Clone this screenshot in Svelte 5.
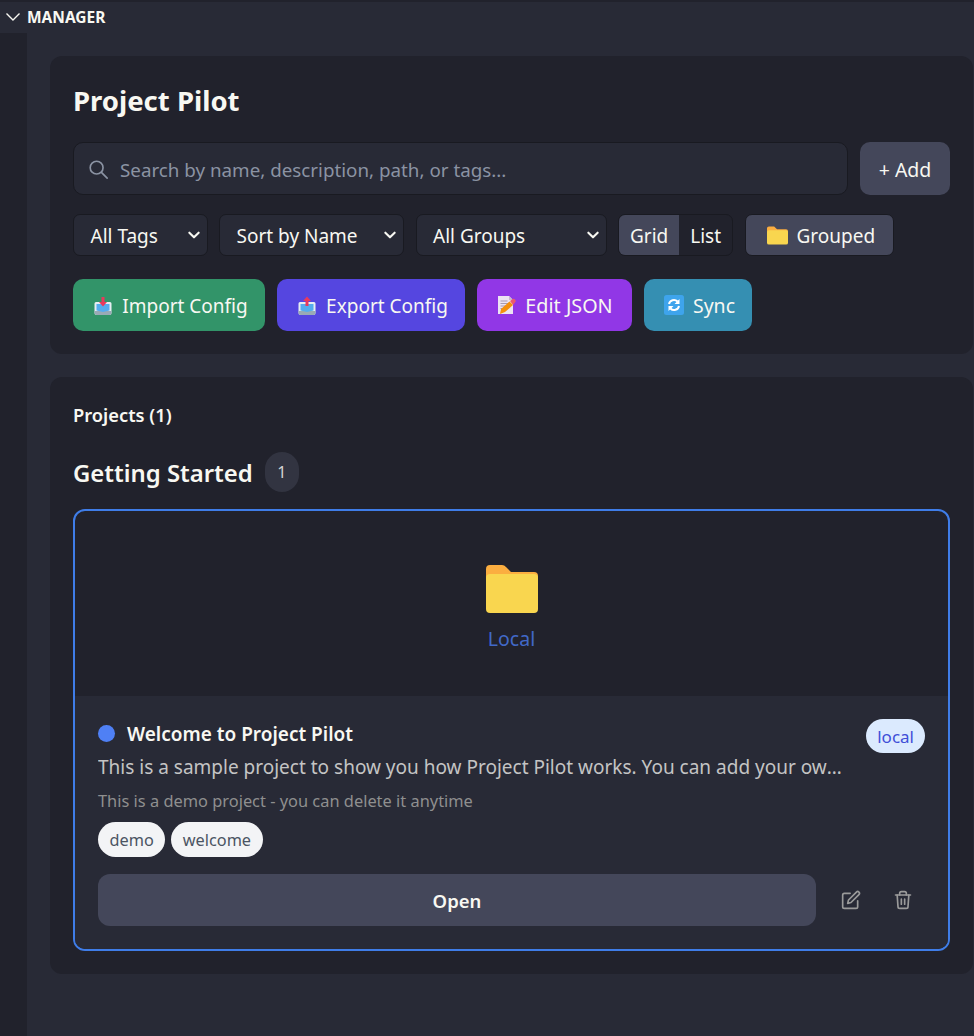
<script lang="ts">
  const filters = [
    { label: 'All Tags', cls: 'tags' },
    { label: 'Sort by Name', cls: 'sort' },
    { label: 'All Groups', cls: 'groups' }
  ]
</script>

<div class="window">
  <div class="section-head">
    <svg class="twisty" viewBox="0 0 16 16" width="16" height="16"><path d="M1.500 4.500 8 11l6.500-6.500" fill="none" stroke="#f8f8f2" stroke-width="1.400" /></svg>
    <span>MANAGER</span>
  </div>

  <div class="body">
    <div class="rail"></div>
    <main class="content">
      <section class="panel toolbar">
        <h1>Project Pilot</h1>

        <div class="search-row">
          <div class="search">
            <svg viewBox="0 0 24 24" width="22" height="22" fill="none" stroke="#8b93a3" stroke-width="1.800" stroke-linecap="round"><circle cx="10.500" cy="10.500" r="7" /><path d="m16 16 6 6" /></svg>
            <span>Search by name, description, path, or tags...</span>
          </div>
          <button class="add">+ Add</button>
        </div>

        <div class="filter-row">
          {#each filters as f}
            <div class="select {f.cls}">
              <span>{f.label}</span>
              <svg viewBox="0 0 12 12" width="14" height="14"><path d="M2 4l4 4 4-4" fill="none" stroke="#f8f8f2" stroke-width="1.800" stroke-linecap="round" stroke-linejoin="round" /></svg>
            </div>
          {/each}
          <div class="toggle">
            <span class="on">Grid</span>
            <span>List</span>
          </div>
          <button class="grouped">
            <svg viewBox="0 0 22 19" width="21" height="19">
              <path d="M0 2a2 2 0 0 1 2-2h5.500l3 3H20a2 2 0 0 1 2 2v3H0z" fill="#fbae40" />
              <path d="M0 6a2 2 0 0 1 2-2h18a2 2 0 0 1 2 2v11a2 2 0 0 1-2 2H2a2 2 0 0 1-2-2z" fill="#f9d64f" />
            </svg>
            <span>Grouped</span>
          </button>
        </div>

        <div class="action-row">
          <button class="action import">
            <svg viewBox="0 0 20 20" width="20" height="20">
              <path d="M1.500 7.500a1.500 1.500 0 0 1 1.500-1.500h14a1.500 1.500 0 0 1 1.500 1.500V17a2 2 0 0 1-2 2H3.500a2 2 0 0 1-2-2z" fill="#e6edf2" />
              <path d="M1.500 15h17v2a2 2 0 0 1-2 2H3.500a2 2 0 0 1-2-2z" fill="#99aab5" />
              <path d="M3.500 8h13v6.500l-6.500 1.500-6.500-1.500z" fill="#55acee" />
              <path d="M8.500 1h3v5h2.500L10 10.500 6 6h2.500z" fill="#e8395c" />
            </svg>
            Import Config
          </button>
          <button class="action export">
            <svg viewBox="0 0 20 20" width="20" height="20">
              <path d="M1.500 7.500a1.500 1.500 0 0 1 1.500-1.500h14a1.500 1.500 0 0 1 1.500 1.500V17a2 2 0 0 1-2 2H3.500a2 2 0 0 1-2-2z" fill="#e6edf2" />
              <path d="M1.500 15h17v2a2 2 0 0 1-2 2H3.500a2 2 0 0 1-2-2z" fill="#99aab5" />
              <path d="M3.500 8h13v6.500l-6.500 1.500-6.500-1.500z" fill="#55acee" />
              <path d="M10 .5 14 5h-2.500v5h-3V5H6z" fill="#e8395c" />
            </svg>
            Export Config
          </button>
          <button class="action edit">
            <svg viewBox="0 0 20 20" width="20" height="20">
              <path d="M2 1h11l4 4v14H2z" fill="#ece3f2" />
              <path d="M13 1v4h4z" fill="#c9b8d2" />
              <path d="M4.500 6h7M4.500 8.500h9M4.500 11h7M4.500 13.500h3" stroke="#a79bb0" stroke-width="1" />
              <path d="M4 19l1-5 8.500-7.500 3.500 3.500-8 7z" fill="#f4900c" />
              <path d="M14 6l2-1.500a1.500 1.500 0 0 1 3 3L17 10z" fill="#ea596e" />
            </svg>
            Edit JSON
          </button>
          <button class="action sync">
            <svg viewBox="0 0 20 20" width="20" height="20">
              <rect width="20" height="20" rx="2.500" fill="#3ea4ec" />
              <path d="M5 9a5 5 0 0 1 8.500-2.500" fill="none" stroke="#fff" stroke-width="2" />
              <path d="M15 11a5 5 0 0 1-8.500 2.500" fill="none" stroke="#fff" stroke-width="2" />
              <path d="M15.500 4v5h-5zM4.500 16v-5h5z" fill="#fff" />
            </svg>
            Sync
          </button>
        </div>
      </section>

      <section class="panel projects">
        <h2>Projects (1)</h2>
        <div class="group-head">
          <h3>Getting Started</h3>
          <span class="count">1</span>
        </div>

        <article class="card">
          <div class="preview">
            <svg viewBox="0 0 52 48" width="52" height="48">
              <path d="M0 4a4 4 0 0 1 4-4h12a6 6 0 0 1 4 2l5 5h23a4 4 0 0 1 4 4v6H0z" fill="#fbae40" />
              <path d="M0 13a4 4 0 0 1 4-4h44a4 4 0 0 1 4 4v31a4 4 0 0 1-4 4H4a4 4 0 0 1-4-4z" fill="#f9d64f" />
            </svg>
            <span>Local</span>
          </div>
          <div class="info">
            <div class="title-row">
              <div class="title"><i class="dot"></i><strong>Welcome to Project Pilot</strong></div>
              <span class="badge">local</span>
            </div>
            <p class="desc">This is a sample project to show you how Project Pilot works. You can add your own projects here.</p>
            <p class="note">This is a demo project - you can delete it anytime</p>
            <div class="chips">
              <span>demo</span>
              <span>welcome</span>
            </div>
            <div class="card-actions">
              <button class="open">Open</button>
              <button class="icon" aria-label="Edit">
                <svg viewBox="0 0 24 24" width="20" height="20" fill="none" stroke="#9a9a9a" stroke-width="2" stroke-linecap="round" stroke-linejoin="round"><path d="M11 4H4a2 2 0 0 0-2 2v14a2 2 0 0 0 2 2h14a2 2 0 0 0 2-2v-7" /><path d="M18.500 2.500a2.121 2.121 0 0 1 3 3L12 15l-4 1 1-4z" /></svg>
              </button>
              <button class="icon" aria-label="Delete">
                <svg viewBox="0 0 24 24" width="20" height="20" fill="none" stroke="#9a9a9a" stroke-width="2" stroke-linecap="round" stroke-linejoin="round"><path d="M3 6h18" /><path d="M19 6l-1 14a2 2 0 0 1-2 2H8a2 2 0 0 1-2-2L5 6" /><path d="M8 6V4a2 2 0 0 1 2-2h4a2 2 0 0 1 2 2v2" /><path d="M10 11v6M14 11v6" /></svg>
              </button>
            </div>
          </div>
        </article>
      </section>
    </main>
  </div>
</div>

<style>
  :global(body) {
    background: #282a36;
    overflow: hidden;
  }

  .window {
    width: 974px;
    height: 1036px;
    display: flex;
    flex-direction: column;
    background: #282a36;
    color: #f8f8f2;
    font-family: "Noto Sans", "Open Sans", sans-serif;
    border-top: 2px solid #21222c;
    box-sizing: border-box;
    overflow: hidden;
  }

  button {
    font-family: inherit;
    border: none;
    color: #f8f8f2;
    cursor: pointer;
  }

  .section-head {
    height: 31px;
    flex: none;
    display: flex;
    align-items: center;
    gap: 6px;
    padding-left: 5px;
    font-size: 15.500px;
    font-weight: 700;
    padding-bottom: 1px;
    box-sizing: border-box;
  }
  .twisty { flex: none; }

  .body {
    flex: 1;
    display: flex;
    min-height: 0;
  }
  .rail {
    width: 27px;
    flex: none;
    background: #21222c;
  }
  .content {
    flex: 1;
    padding: 23px 1px 0 23px;
    display: flex;
    flex-direction: column;
    gap: 23px;
    min-width: 0;
  }

  .panel {
    background: #21222c;
    border-radius: 12px;
    padding: 23px;
  }

  .toolbar { height: 298px; box-sizing: border-box; padding-top: 25px; }

  h1 {
    margin: 0 0 21px;
    font-size: 27.500px;
    line-height: 40px;
    font-weight: 700;
  }

  .search-row {
    display: flex;
    gap: 12px;
    height: 53px;
    margin-bottom: 19px;
  }
  .search {
    flex: 1;
    display: flex;
    align-items: center;
    gap: 11px;
    padding-left: 13px;
    background: #282a36;
    border: 1px solid #191a21;
    border-radius: 10px;
    color: #8b93a3;
    font-size: 18.800px;
  }
  .search span { padding-top: 2px; }
  .add {
    width: 90px;
    background: #44475a;
    border-radius: 10px;
    font-size: 19.500px;
    padding: 2px 0 0;
  }

  .filter-row {
    display: flex;
    gap: 11.500px;
    height: 42px;
    margin-bottom: 23px;
    font-size: 19px;
  }
  .select {
    display: flex;
    align-items: center;
    justify-content: space-between;
    box-sizing: border-box;
    padding: 0 6px 0 16.500px;
    border: 1px solid #191a21;
    border-radius: 7px;
    background: #282a36;
  }
  .select span { padding-top: 2px; }
  .tags { width: 135px; }
  .sort { width: 185px; margin-left: -0.500px; }
  .groups { width: 191px; }

  .toggle {
    display: flex;
    width: 115px;
    box-sizing: border-box;
    border: 1px solid #191a21;
    border-radius: 7px;
    overflow: hidden;
    background: #21222c;
  }
  .toggle span {
    flex: 1 1 auto;
    display: flex;
    align-items: center;
    justify-content: center;
    padding-top: 2px;
  }
  .toggle .on { background: #44475a; }

  .grouped {
    display: flex;
    align-items: center;
    gap: 9px;
    width: 149px;
    box-sizing: border-box;
    padding: 0 0 0 21px;
    background: #44475a;
    border: 1px solid #191a21;
    border-radius: 7px;
    font-size: 19px;
  }
  .grouped span { padding-top: 2px; }

  .action-row {
    display: flex;
    gap: 12px;
    height: 52px;
  }
  .action {
    display: flex;
    align-items: center;
    justify-content: center;
    gap: 9px;
    border-radius: 10px;
    font-size: 19px;
    padding: 2px 0 0 3px;
  }
  .import { width: 192px; background: #329469; }
  .export { width: 188px; background: #5546e0; }
  .edit { width: 155px; background: #9137e6; font-size: 19.800px; padding: 0; }
  .sync { width: 108px; background: #358fb2; font-size: 19.500px; padding-top: 0; }

  .projects { flex: none; height: 597px; box-sizing: border-box; padding-top: 25px; }

  h2 {
    margin: 0 0 25px;
    font-size: 18.300px;
    line-height: 25px;
    font-weight: 600;
  }

  .group-head {
    display: flex;
    align-items: center;
    gap: 12px;
    height: 40px;
    margin-bottom: 17px;
  }
  h3 {
    margin: 0;
    font-size: 23.900px;
    font-weight: 600;
  }
  .count {
    width: 34px;
    height: 40px;
    display: flex;
    align-items: center;
    justify-content: center;
    border-radius: 20px;
    background: #323441;
    color: #d4d4d4;
    font-size: 16px;
  }

  .card {
    height: 442px;
    box-sizing: border-box;
    border: 2px solid #3f7de8;
    border-radius: 12px;
    overflow: hidden;
    display: flex;
    flex-direction: column;
  }
  .preview {
    height: 185px;
    flex: none;
    display: flex;
    flex-direction: column;
    align-items: center;
    justify-content: flex-start;
    padding-top: 54px;
    box-sizing: border-box;
    gap: 12px;
    color: #4169c8;
    font-size: 19.500px;
  }

  .info {
    flex: 1;
    background: #282a36;
    padding: 23px 23px 0;
  }
  .title-row {
    display: flex;
    align-items: flex-start;
    justify-content: space-between;
    height: 34px;
  }
  .title {
    display: flex;
    align-items: center;
    gap: 12px;
    height: 28px;
    font-size: 19px;
  }
  .title strong { font-weight: 600; padding-top: 2px; }
  .dot {
    width: 17px;
    height: 17px;
    border-radius: 50%;
    background: #4f80f5;
  }
  .badge {
    display: flex;
    align-items: center;
    height: 34px;
    padding: 0 11px;
    border-radius: 17px;
    background: #dbeafe;
    color: #3f4fd8;
    font-size: 17px;
  }

  .desc {
    margin: 0;
    width: 752px;
    font-size: 19px;
    line-height: 28px;
    color: #c4c4c4;
    white-space: nowrap;
    overflow: hidden;
    text-overflow: ellipsis;
  }
  .note {
    margin: 10px 0 0;
    font-size: 16.400px;
    line-height: 20px;
    color: #8f8f8f;
  }

  .chips {
    display: flex;
    gap: 6px;
    margin-top: 11px;
  }
  .chips span {
    display: flex;
    align-items: center;
    height: 35px;
    padding: 1px 11.500px 0;
    box-sizing: border-box;
    border-radius: 18px;
    background: #f3f4f6;
    color: #4b5563;
    font-size: 16.300px;
  }

  .card-actions {
    display: flex;
    align-items: center;
    margin-top: 17px;
  }
  .open {
    flex: none;
    width: 718px;
    height: 52px;
    background: #44475a;
    border-radius: 12px;
    font-size: 18.500px;
    font-weight: 600;
  }
  .icon {
    flex: none;
    width: 52px;
    height: 52px;
    background: none;
    display: flex;
    align-items: center;
    justify-content: center;
    padding: 0;
  }
  .open + .icon { margin-left: 9px; }
</style>
